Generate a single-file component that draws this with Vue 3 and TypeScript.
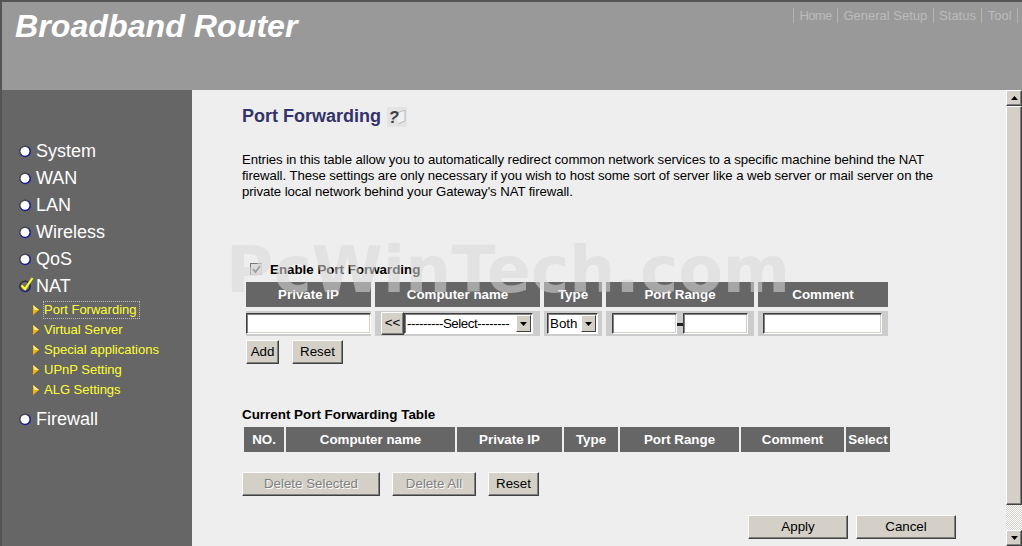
<script setup lang="ts">
const navLinks = ['Home', 'General Setup', 'Status', 'Tool']
const before = ['System', 'WAN', 'LAN', 'Wireless', 'QoS']
const subItems = ['Port Forwarding', 'Virtual Server', 'Special applications', 'UPnP Setting', 'ALG Settings']
const formCols = ['Private IP', 'Computer name', 'Type', 'Port Range', 'Comment']
const listCols = ['NO.', 'Computer name', 'Private IP', 'Type', 'Port Range', 'Comment', 'Select']
</script>

<template>
  <div class="page">
    <header class="top">
      <h1 class="brand">Broadband Router</h1>
      <nav class="links">
        <template v-for="l in navLinks" :key="l">
          <span class="bar"></span><a class="link">{{ l }}</a>
        </template>
        <span class="bar"></span>
      </nav>
    </header>
    <div class="body">
      <aside class="side">
        <div v-for="m in before" :key="m" class="menu">
          <svg class="dot" width="13" height="13" viewBox="0 0 13 13"><circle cx="6.2" cy="6.5" r="5.8" fill="#1c1c90" /><path d="M1.2 9.5A5.8 5.8 0 0 1 9.2 1.5L6.2 6.5Z" fill="#4a4a4a" /><circle cx="6" cy="6.3" r="4.4" fill="#fff" /></svg>
          <span>{{ m }}</span>
        </div>
        <div class="menu">
          <svg class="dot nat" width="15" height="18" viewBox="0 0 15 18"><circle cx="6.2" cy="10.5" r="5.8" fill="#1c1c80" /><path d="M1.2 13.5A5.8 5.8 0 0 1 9.2 5.5L6.2 10.5Z" fill="#333" /><circle cx="6" cy="10.3" r="4.4" fill="#6e6e6e" /><path d="M2.5 9.5 L6 13 L13.5 2" fill="none" stroke="#ffff22" stroke-width="2.2" /></svg>
          <span>NAT</span>
        </div>
        <div class="subs">
          <div v-for="(s, i) in subItems" :key="s" class="sub">
            <svg width="6" height="10" viewBox="0 0 6 10"><path d="M0 0 L6 5 L0 10Z" fill="#f0b400" /><path d="M0 0 L6 5 L1.5 5Z" fill="#ffee88" /></svg>
            <span class="sub-label" :class="{ focus: i === 0 }">{{ s }}</span>
          </div>
        </div>
        <div class="menu">
          <svg class="dot" width="13" height="13" viewBox="0 0 13 13"><circle cx="6.2" cy="6.5" r="5.8" fill="#1c1c90" /><path d="M1.2 9.5A5.8 5.8 0 0 1 9.2 1.5L6.2 6.5Z" fill="#4a4a4a" /><circle cx="6" cy="6.3" r="4.4" fill="#fff" /></svg>
          <span>Firewall</span>
        </div>
      </aside>

      <main class="main">
        <div class="title-row">
          <h2 class="title">Port Forwarding</h2>
          <svg class="help" width="20" height="20" viewBox="0 0 20 20">
            <rect width="20" height="20" fill="#e4e4e4" />
            <path d="M10 6 L18 3 V14 L11 17" fill="#f0f0f0" stroke="#bcbcbc" />
            <text x="1.5" y="16" font-family="Liberation Sans, sans-serif" font-style="italic" font-weight="700" font-size="17" fill="#3a4646">?</text>
          </svg>
        </div>
        <p class="intro">Entries in this table allow you to automatically redirect common network services to a specific machine behind the NAT firewall. These settings are only necessary if you wish to host some sort of server like a web server or mail server on the private local network behind your Gateway's NAT firewall.</p>

        <div class="enable">
          <span class="check">
            <svg width="9" height="9" viewBox="0 0 9 9"><path d="M1 4 L3.5 7 L8 1" fill="none" stroke="#555" stroke-width="1.8" /></svg>
          </span>
          <span>Enable Port Forwarding</span>
        </div>

        <div class="form-table">
          <div v-for="c in formCols" :key="c" class="th">{{ c }}</div>
          <div class="td"><input class="field" type="text" /></div>
          <div class="td td-pick">
            <button class="btn pick" type="button">&lt;&lt;</button>
            <div class="select wide"><span class="select-text">---------Select--------</span><span class="arrow"><svg width="7" height="4" viewBox="0 0 7 4"><path d="M0 0H7L3.5 4Z" /></svg></span></div>
          </div>
          <div class="td td-type">
            <div class="select small"><span class="select-text">Both</span><span class="arrow"><svg width="7" height="4" viewBox="0 0 7 4"><path d="M0 0H7L3.5 4Z" /></svg></span></div>
          </div>
          <div class="td td-range">
            <input class="field" type="text" /><span class="dash"></span><input class="field" type="text" />
          </div>
          <div class="td td-comment"><input class="field" type="text" /></div>
        </div>

        <div class="row-add">
          <button class="btn add" type="button">Add</button>
          <button class="btn reset" type="button">Reset</button>
        </div>

        <h3 class="table-title">Current Port Forwarding Table</h3>
        <div class="list-table">
          <div v-for="c in listCols" :key="c" class="th">{{ c }}</div>
        </div>

        <div class="row-del">
          <button class="btn del-sel off" type="button">Delete Selected</button>
          <button class="btn del-all off" type="button">Delete All</button>
          <button class="btn reset" type="button">Reset</button>
        </div>

        <div class="row-apply">
          <button class="btn wide-btn" type="button">Apply</button>
          <button class="btn wide-btn" type="button">Cancel</button>
        </div>
      </main>

      <div class="scroll">
        <div class="sb-btn"><svg width="7" height="4" viewBox="0 0 7 4"><path d="M3.5 0L7 4H0Z" /></svg></div>
        <div class="sb-thumb"></div>
        <div class="sb-track"></div>
        <div class="sb-btn"><svg width="7" height="4" viewBox="0 0 7 4"><path d="M0 0H7L3.5 4Z" /></svg></div>
      </div>
    </div>
    <div class="mark">PcWinTech.com</div>
  </div>
</template>

<style>
html, body { margin: 0; overflow: hidden; }
</style>

<style scoped>
.page { position: relative; width: 1022px; height: 546px; box-sizing: border-box; border-top: 2px solid #555; border-left: 2px solid #555; overflow: hidden; font-family: "Liberation Sans", Arial, sans-serif; background: #eee; display: flex; flex-direction: column; }
.top { height: 88px; flex: none; background: #999; display: flex; justify-content: space-between; align-items: flex-start; }
.brand { margin: 5px 0 0 13px; font-size: 32.2px; line-height: 38px; font-weight: 700; font-style: italic; color: #fff; }
.links { display: flex; align-items: center; height: 16px; margin: 5px 4px 0 0; color: #bbb; font-size: 13px; }
.bar { width: 1px; height: 15px; background: #b4b4a8; }
.link { padding: 0 5.4px; }
.link:first-of-type { letter-spacing: -0.6px; }
.body { flex: 1; display: flex; min-height: 0; }
.side { width: 190px; flex: none; background: #666; padding-top: 48px; box-sizing: border-box; color: #fff; }
.menu { display: flex; align-items: center; height: 27px; padding-left: 17px; font-size: 18px; }
.dot { margin-right: 4px; flex: none; }
.dot.nat { margin-right: 2px; margin-top: -4px; }
.subs { padding: 0 0 6px 31px; }
.sub { display: flex; align-items: center; height: 20px; color: #ffff33; font-size: 13px; }
.sub-label { margin-left: 4px; padding: 0 3px 0 0; border: 1px dotted transparent; line-height: 16px; }
.sub-label.focus { border-color: #bbb; }
.main { flex: 1; min-width: 0; position: relative; padding: 0 0 0 50px; color: #000; }
.title-row { display: flex; align-items: center; height: 22px; margin-top: 15px; }
.title { margin: 0; font-size: 18px; line-height: 22px; font-weight: 700; color: #33336a; }
.help { margin: 2px 0 0 6px; }
.intro { width: 695px; margin: 25px 0 0; font-size: 13.2px; letter-spacing: -0.07px; line-height: 16px; }
.enable { display: flex; align-items: center; height: 18px; margin: 60px 0 0 8px; font-size: 13.33px; font-weight: 700; color: #000; }
.check { box-sizing: border-box; width: 12px; height: 12px; margin-right: 8px; display: flex; align-items: center; justify-content: center; background: #dcdcdc; border: 1px solid; border-color: #777 #ccc #ccc #777; }
.form-table { display: grid; grid-template-columns: 125px 165px 58px 148px 130px; gap: 4px; margin: 4px 0 0 4px; width: 642px; }
.th { background: #666; color: #fff; height: 25px; display: flex; align-items: center; justify-content: center; font-size: 13.33px; font-weight: 700; }
.td { background: #ccc; height: 25px; display: flex; align-items: center; }
.field { box-sizing: border-box; height: 21px; width: 100%; border: 1px solid; border-color: #404040 #fff #fff #404040; box-shadow: inset 1px 1px 0 #808080, inset -1px -1px 0 #d4d0c8; background: #fff; padding: 0; margin: 0; outline: none; }
.td-pick { padding-left: 6px; }
.btn { box-sizing: border-box; height: 24px; padding: 0 0 2px; background: #d4d0c8; border: 1px solid; border-color: #fff #404040 #404040 #fff; box-shadow: inset -1px -1px 0 #808080; font: 13.33px "Liberation Sans", Arial, sans-serif; color: #000; }
.pick { width: 23px; height: 23px; flex: none; }
.select { box-sizing: border-box; height: 21px; display: flex; align-items: center; justify-content: space-between; background: #fff; border: 1px solid; border-color: #404040 #fff #fff #404040; box-shadow: inset 1px 1px 0 #808080; font-size: 13.33px; }
.select.wide { width: 129px; letter-spacing: -0.45px; }
.select.small { width: 51px; margin-left: 3px; }
.select-text { padding-left: 2px; white-space: nowrap; }
.arrow { width: 15px; height: 17px; margin-right: 1px; flex: none; display: flex; align-items: center; justify-content: center; box-sizing: border-box; background: #d4d0c8; border: 1px solid; border-color: #fff #404040 #404040 #fff; }
.td-range { padding: 0 6px; }
.td-range .field { width: 65px; }
.dash { width: 6px; height: 3px; background: #222; margin: 1px 0 0; flex: none; }
.td-comment { padding: 0 6px 0 5px; }
.row-add { display: flex; gap: 13px; margin: 4px 0 0 4px; }
.add { width: 33px; }
.reset { width: 51px; }
.table-title { margin: 43px 0 0; font-size: 13.4px; line-height: 16px; font-weight: 700; }
.list-table { display: grid; grid-template-columns: 40px 169px 105px 54px 119px 103px 44px; gap: 2px; margin: 4px 0 0 2px; width: 646px; }
.list-table .th { white-space: nowrap; }
.row-del { display: flex; gap: 12px; margin-top: 20px; }
.del-sel { width: 138px; }
.del-all { width: 84px; }
.off { color: #808080; text-shadow: 1px 1px 0 #fff; }
.row-apply { display: flex; gap: 8px; margin: 19px 0 0 506px; }
.wide-btn { width: 100px; }
.scroll { width: 16px; flex: none; display: flex; flex-direction: column; background: #d4d0c8; }
.sb-btn { box-sizing: border-box; width: 16px; height: 16px; flex: none; display: flex; align-items: center; justify-content: center; background: #d4d0c8; border: 1px solid; border-color: #fff #404040 #404040 #fff; box-shadow: inset -1px -1px 0 #808080; }
.sb-thumb { box-sizing: border-box; flex: none; height: 399px; background: #d4d0c8; border: 1px solid; border-color: #fff #404040 #404040 #fff; box-shadow: inset -1px -1px 0 #808080; }
.sb-track { flex: 1; background: repeating-conic-gradient(#fff 0 25%, #d4d0c8 0 50%) 0 0 / 2px 2px; }
.mark { position: absolute; left: 224px; top: 233px; font-family: "DejaVu Sans", sans-serif; font-size: 64.5px; letter-spacing: 0.15px; line-height: 70px; font-weight: 700; white-space: nowrap; color: rgba(215, 215, 215, 0.56); pointer-events: none; }
</style>
